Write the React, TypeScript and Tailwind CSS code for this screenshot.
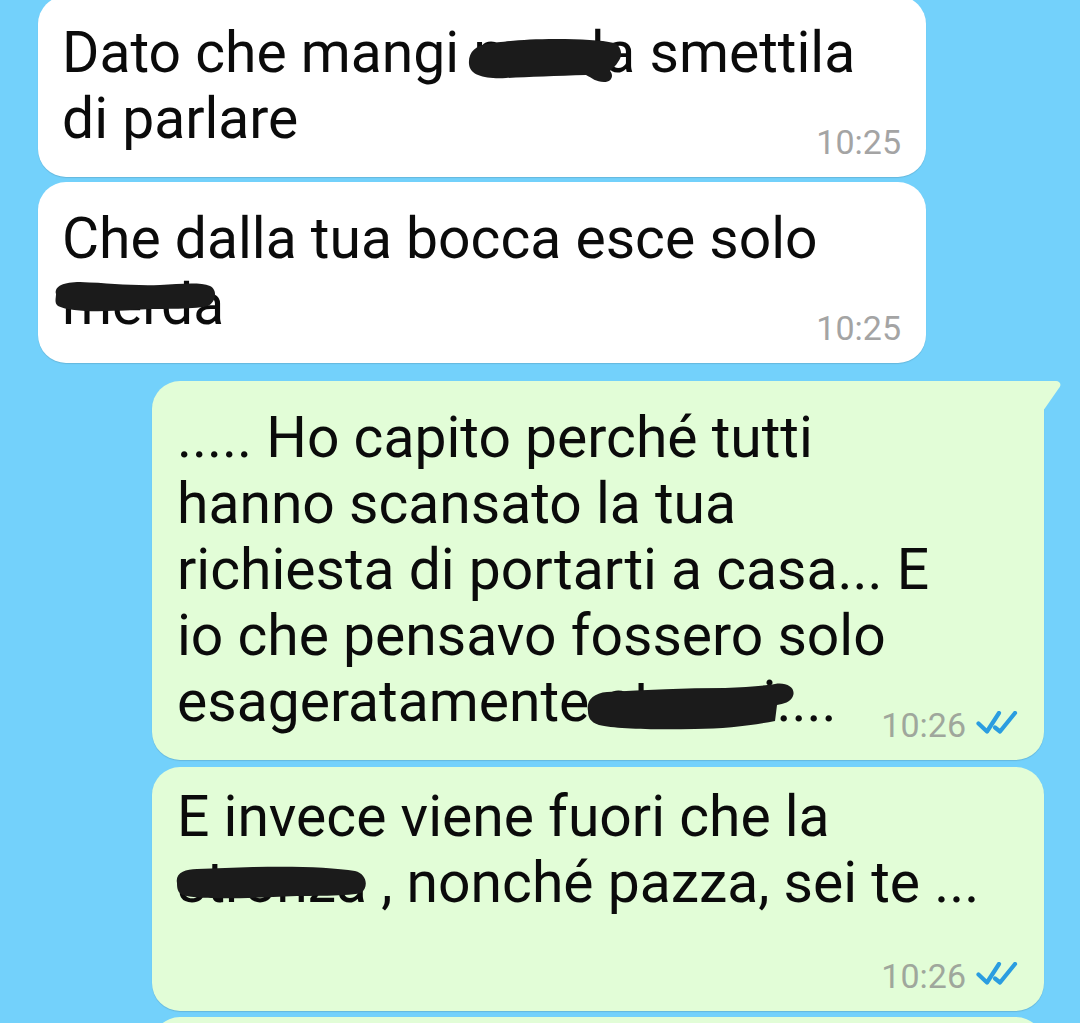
type Scribble = { d: string; w: number; h: number; left: number; top: number }

function Hidden({ word, s }: { word: string; s: Scribble }) {
  return (
    <span className="relative">
      {word}
      <svg
        className="absolute"
        style={{ left: s.left, top: s.top }}
        width={s.w}
        height={s.h}
        viewBox={`0 0 ${s.w} ${s.h}`}
      >
        <path d={s.d} fill="#1b1b1b" />
      </svg>
    </span>
  )
}

function Ticks() {
  return (
    <svg width="42" height="23" viewBox="0 0 42 23" className="self-start mt-[3px]" fill="none">
      <path d="M2.5 12.5 L11 20.5 L23 2" stroke="#2b9de0" strokeWidth="4.2" strokeLinecap="round" strokeLinejoin="round" />
      <path d="M19 16.5 L24 20.5 L39 2" stroke="#2b9de0" strokeWidth="4.2" strokeLinecap="round" strokeLinejoin="round" />
    </svg>
  )
}

const scribbleDato: Scribble = {
  w: 158,
  h: 46,
  left: -7,
  top: 19,
  d: "M3 26 C2 14 10 8 20 6 C40 3 60 1 90 1 C115 1 135 2 148 5 C156 8 157 18 152 24 C150 28 146 30 144 33 C148 37 146 44 138 44 C130 44 126 40 120 37 C90 38 60 39 40 40 C20 41 4 38 3 26 Z",
}

const scribbleBocca: Scribble = {
  w: 168,
  h: 32,
  left: -12,
  top: 9,
  d: "M6 14 C4 6 14 2 30 2 C60 3 80 6 110 5 C130 4 150 2 160 6 C168 10 166 22 158 26 C140 30 110 28 80 30 C50 32 20 32 8 26 C4 23 6 18 6 14 Z",
}

const scribbleEsag: Scribble = {
  w: 212,
  h: 48,
  left: -18,
  top: 15,
  d: "M3 28 C1 18 8 10 22 9 C60 7 100 5 140 5 C160 4 178 3 190 1 C202 -1 211 5 208 13 C206 19 198 21 192 22 L190 38 C170 42 140 46 110 46 C70 47 30 46 14 42 C5 39 3 34 3 28 Z",
}

const scribbleInvece: Scribble = {
  w: 196,
  h: 34,
  left: -4,
  top: 16,
  d: "M4 18 C2 8 12 4 24 4 L80 2 C120 1 160 2 182 6 C194 9 196 22 188 28 C170 32 130 30 100 32 C60 34 20 34 10 30 C5 28 4 24 4 18 Z",
}

function Time({ t, sent }: { t: string; sent?: boolean }) {
  return (
    <div className="flex justify-end items-center gap-[10px]">
      <span className={`text-[34px] leading-[34px] ${sent ? "text-[#9fa79c]" : "text-[#a4a4a4]"}`}>{t}</span>
      {sent && <Ticks />}
    </div>
  )
}

export default function App() {
  return (
    <div
      className="h-[1023px] w-[1080px] overflow-hidden bg-[#73d1fb] text-[#0b0b0b]"
      style={{ fontFamily: "Roboto, 'Noto Sans', sans-serif" }}
    >
      <div className="flex flex-col">
        {/* incoming */}
        <div className="-mt-[4px] ml-[38px] w-[888px] rounded-[28px] bg-white pl-[24px] pr-[25px] pt-[24px] pb-[18px] shadow-[0_1px_1px_rgba(0,0,0,0.12)]">
          <p className="text-[57px] leading-[66px] whitespace-nowrap">
            Dato che mangi <Hidden word="merda" s={scribbleDato} /> smettila
            <br />
            di parlare
          </p>
          <div className="-mt-[27px]">
            <Time t="10:25" />
          </div>
        </div>

        <div className="mt-[5px] ml-[38px] w-[888px] rounded-[28px] bg-white pl-[24px] pr-[25px] pt-[24px] pb-[18px] shadow-[0_1px_1px_rgba(0,0,0,0.12)]">
          <p className="text-[57px] leading-[66px] whitespace-nowrap">
            Che dalla tua bocca esce solo
            <br />
            <Hidden word="merda" s={scribbleBocca} />
          </p>
          <div className="-mt-[27px]">
            <Time t="10:25" />
          </div>
        </div>

        {/* outgoing */}
        <div className="relative mt-[18px] ml-[152px] w-[892px] rounded-[28px] rounded-tr-none bg-[#e2fdd7] pl-[25px] pr-[26px] pt-[24px] pb-[18px] shadow-[0_1px_1px_rgba(0,0,0,0.12)]">
          <svg className="absolute -right-[17px] top-0" width="18" height="31" viewBox="0 0 18 31">
            <path d="M0 0 H13 C17 0 19 4 16 7 L0 30 Z" fill="#e2fdd7" />
          </svg>
          <p className="text-[57px] leading-[66px] whitespace-nowrap">
            ..... Ho capito perché tutti
            <br />
            hanno scansato la tua
            <br />
            richiesta di portarti a casa... E
            <br />
            io che pensavo fossero solo
            <br />
            esageratamente <Hidden word="stronzi" s={scribbleEsag} />
            ....
          </p>
          <div className="-mt-[27px]">
            <Time t="10:26" sent />
          </div>
        </div>

        <div className="mt-[7px] ml-[152px] w-[892px] rounded-[28px] bg-[#e2fdd7] pl-[25px] pr-[26px] pt-[17px] pb-[18px] shadow-[0_1px_1px_rgba(0,0,0,0.12)]">
          <p className="text-[57px] leading-[66px] whitespace-nowrap">
            E invece viene fuori che la
            <br />
            <Hidden word="stronza" s={scribbleInvece} /> , nonché pazza, sei te ...
          </p>
          <div className="mt-[43px]">
            <Time t="10:26" sent />
          </div>
        </div>

        <div className="mt-[6px] ml-[152px] h-[80px] w-[892px] rounded-[28px] bg-[#e2fdd7]" />
      </div>
    </div>
  )
}
